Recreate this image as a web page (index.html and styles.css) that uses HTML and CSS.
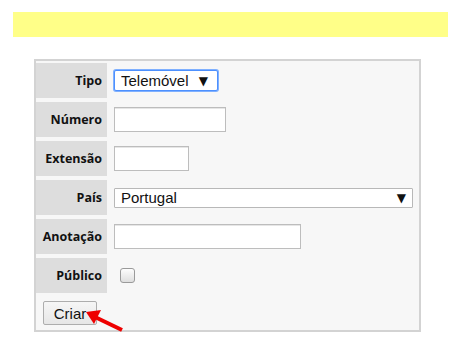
FILE: index.html
```html
<!DOCTYPE html>
<html lang="pt">
  <head>
    <meta charset="UTF-8" />
    <title>Novo contacto</title>
    <link rel="stylesheet" href="styles.css">
  </head>
  <body>
    <div class="notice"></div>
    <form class="contact-form">
      <div class="row">
        <label class="label" for="tipo">Tipo</label>
        <div class="field">
          <div class="select-wrap select-tipo">
            <select id="tipo" class="select focused">
              <option>Telemóvel</option>
            </select>
            <span class="caret">▼</span>
          </div>
        </div>
      </div>
      <div class="row">
        <label class="label" for="numero">Número</label>
        <div class="field"><input type="text" id="numero" class="text w-numero" /></div>
      </div>
      <div class="row">
        <label class="label" for="extensao">Extensão</label>
        <div class="field"><input type="text" id="extensao" class="text w-extensao" /></div>
      </div>
      <div class="row">
        <label class="label" for="pais">País</label>
        <div class="field">
          <div class="select-wrap select-pais">
            <select id="pais" class="select">
              <option>Portugal</option>
            </select>
            <span class="caret">▼</span>
          </div>
        </div>
      </div>
      <div class="row">
        <label class="label" for="anotacao">Anotação</label>
        <div class="field"><input type="text" id="anotacao" class="text w-anotacao" /></div>
      </div>
      <div class="row">
        <label class="label" for="publico">Público</label>
        <div class="field"><input type="checkbox" id="publico" class="check" /></div>
      </div>
      <div class="actions">
        <button type="button" class="btn">Criar</button>
        <svg class="pointer" width="42" height="30" viewBox="0 0 42 30">
          <line x1="11" y1="11" x2="38" y2="24" stroke="#ee0000" stroke-width="4" />
          <polygon points="2,6 17,4 10,18" fill="#ee0000" />
        </svg>
      </div>
    </form>
  </body>
</html>
```

FILE: styles.css
```css
* {
  box-sizing: border-box;
}
body {
  margin: 0;
  font-family: "Liberation Sans", Arial, sans-serif;
  background: #fff;
  color: #111;
}
.notice {
  margin: 12px 0 0 13px;
  width: 435px;
  height: 25px;
  background: #ffff88;
}
.contact-form {
  margin: 22px 0 0 34px;
  width: 387px;
  border: 2px solid #d3d3d3;
  background: #f7f7f7;
  padding: 2px 2px 5px 0;
}
.row {
  display: grid;
  grid-template-columns: 71px 1fr;
  column-gap: 7px;
  height: 35px;
  margin-bottom: 4px;
  align-items: center;
}
.label {
  height: 100%;
  background: #dddddd;
  display: flex;
  align-items: center;
  justify-content: flex-end;
  padding-right: 5px;
  font-family: "Open Sans", "DejaVu Sans", sans-serif;
  font-weight: bold;
  font-size: 12.5px;
  color: #111;
}
.field {
  display: flex;
  align-items: center;
}
.text {
  height: 25px;
  border: 1px solid #bdbdbd;
  box-shadow: inset 0 1px 0 #e6e6e6;
  background: #fff;
  padding: 0 5px;
  font: 15px "Liberation Sans", Arial, sans-serif;
}
.w-numero {
  width: 112px;
}
.w-extensao {
  width: 75px;
}
.w-anotacao {
  width: 187px;
}
.select-wrap {
  position: relative;
}
.select {
  appearance: none;
  -webkit-appearance: none;
  width: 100%;
  height: 100%;
  margin: 0;
  background: #fff;
  border: 1px solid #b8b8b8;
  border-radius: 1px;
  padding: 0 0 0 6px;
  font: 15px "Liberation Sans", Arial, sans-serif;
  color: #111;
  outline: none;
}
.select.focused {
  border: 1px solid #4d90fe;
  box-shadow: 0 0 0 1px #7fb0ff;
  border-radius: 2px;
}
.select-tipo {
  width: 104px;
  height: 21px;
}
.select-pais {
  width: 299px;
  height: 20px;
}
.caret {
  position: absolute;
  top: 50%;
  transform: translateY(-50%);
  font-family: "DejaVu Sans", sans-serif;
  font-size: 12px;
  line-height: 1;
  color: #111;
  pointer-events: none;
}
.select-tipo .caret {
  right: 10px;
}
.select-pais .caret {
  right: 7px;
}
.check {
  appearance: none;
  -webkit-appearance: none;
  width: 15px;
  height: 15px;
  margin: 0 0 0 6px;
  border: 1px solid #9a9a9a;
  border-radius: 3px;
  background: linear-gradient(#fdfdfd, #dedede);
}
.actions {
  position: relative;
  padding: 4px 0 0 7px;
}
.btn {
  display: block;
  width: 54px;
  height: 24px;
  padding: 0;
  border: 1px solid #adadad;
  border-radius: 2px;
  background: linear-gradient(#f6f6f6, #e6e6e6);
  font: 15px "Liberation Sans", Arial, sans-serif;
  color: #111;
}
.pointer {
  position: absolute;
  left: 48px;
  top: 9px;
  overflow: visible;
}
```
